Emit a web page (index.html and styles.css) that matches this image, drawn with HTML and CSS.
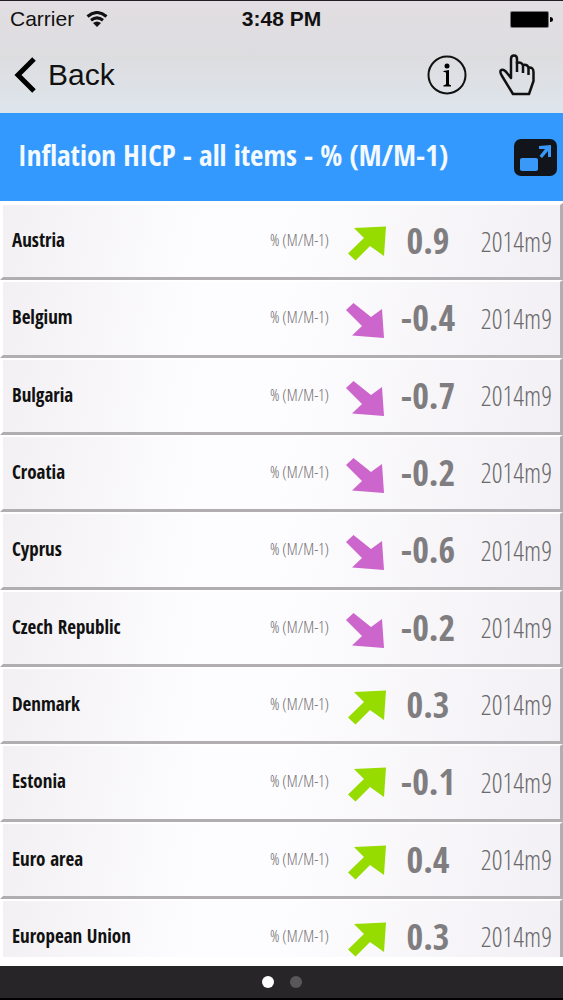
FILE: index.html
```html
<!DOCTYPE html>
<html lang="en">
<head>
  <meta charset="UTF-8">
  <meta name="viewport" content="width=device-width, initial-scale=1.0">
  <title>Inflation HICP</title>
  <link rel="stylesheet" href="styles.css">
</head>
<body>
  <svg class="defs" aria-hidden="true">
    <symbol id="arrow-up" viewBox="0 0 40 40">
      <path d="M8 7 L40 5.500 L38 35 L24 25 L9.500 39.500 L2 32.500 L18 17 Z"/>
    </symbol>
    <symbol id="arrow-down" viewBox="0 0 40 40">
      <path d="M7.500 5 L25 19 L36 11 L38 40 L6 37.500 L16 28 L0 12 Z"/>
    </symbol>
  </svg>

  <header class="top">
    <div class="status">
      <div class="carrier">
        <span>Carrier</span>
        <svg class="wifi" viewBox="0 0 22 16">
          <path d="M1.500 5.500 Q11 -2.500 20.500 5.500" />
          <path d="M5 9.200 Q11 4.500 17 9.200" />
          <path class="solid" d="M7 12 Q11 9 15 12 L11 16 Z" />
        </svg>
      </div>
      <span class="time">3:48 PM</span>
      <svg class="battery" viewBox="0 0 43 17">
        <rect x="0" y="0" width="39" height="17" rx="2" fill="#777"/>
        <rect x="1" y="1" width="37" height="15" rx="1"/>
        <path d="M40 6 Q43 6 43 8.500 Q43 11 40 11 Z"/>
      </svg>
    </div>
    <nav class="nav">
      <a href="#" class="back">
        <svg class="chevron" viewBox="0 0 22 36"><path d="M20 2 L4 18 L20 34"/></svg>
        <span>Back</span>
      </a>
      <button class="icon-btn" aria-label="Info">
        <svg class="info" viewBox="0 0 40 40">
          <circle class="ring" cx="20" cy="20" r="18.500"/>
          <circle cx="20" cy="11" r="2.500"/>
          <path d="M16.500 16 L22 15 V29 Q22 30 24 30.300 V31.500 H16.500 V30.300 Q19 30 19 29 V18 Q19 16.700 16.500 17 Z"/>
        </svg>
      </button>
      <button class="icon-btn" aria-label="Select">
        <svg class="hand" viewBox="0 0 36 42">
          <path d="M14 40 L3 22 Q0 17 2.500 16 Q5 15 8 19 L12 24 V5 Q12 1.500 15 1.500 Q18 1.500 18 5 V9 Q22 7.500 24 11 Q28 10 29.500 13.500 Q34.500 13 34.500 18 V27 L30 40 Z"/>
          <path d="M18 8 V18 M24 11 V19 M29.500 14 V21"/>
        </svg>
      </button>
    </nav>
  </header>

  <div class="title-bar">
    <h1>Inflation HICP - all items - % (M/M-1)</h1>
    <button class="expand" aria-label="Expand">
      <svg viewBox="0 0 43 37">
        <rect width="43" height="37" rx="7" fill="#11151b"/>
        <rect x="6" y="19" width="18" height="13" rx="2" fill="#3a98f8"/>
        <path d="M25 7 L37 6 L37 18 L34 18 V12 L28 19 L25.500 17 L31 10 H25 Z" fill="#3a98f8"/>
      </svg>
    </button>
  </div>

  <main class="panel">
    <ul class="list">
      <li class="row"><div class="cells"><span class="name">Austria</span><span class="unit">% (M/M-1)</span><svg class="arrow up"><use href="#arrow-up"/></svg><span class="value">0.9</span><span class="date">2014m9</span></div></li>
      <li class="row"><div class="cells"><span class="name">Belgium</span><span class="unit">% (M/M-1)</span><svg class="arrow down"><use href="#arrow-down"/></svg><span class="value">-0.4</span><span class="date">2014m9</span></div></li>
      <li class="row"><div class="cells"><span class="name">Bulgaria</span><span class="unit">% (M/M-1)</span><svg class="arrow down"><use href="#arrow-down"/></svg><span class="value">-0.7</span><span class="date">2014m9</span></div></li>
      <li class="row"><div class="cells"><span class="name">Croatia</span><span class="unit">% (M/M-1)</span><svg class="arrow down"><use href="#arrow-down"/></svg><span class="value">-0.2</span><span class="date">2014m9</span></div></li>
      <li class="row"><div class="cells"><span class="name">Cyprus</span><span class="unit">% (M/M-1)</span><svg class="arrow down"><use href="#arrow-down"/></svg><span class="value">-0.6</span><span class="date">2014m9</span></div></li>
      <li class="row"><div class="cells"><span class="name">Czech Republic</span><span class="unit">% (M/M-1)</span><svg class="arrow down"><use href="#arrow-down"/></svg><span class="value">-0.2</span><span class="date">2014m9</span></div></li>
      <li class="row"><div class="cells"><span class="name">Denmark</span><span class="unit">% (M/M-1)</span><svg class="arrow up"><use href="#arrow-up"/></svg><span class="value">0.3</span><span class="date">2014m9</span></div></li>
      <li class="row"><div class="cells"><span class="name">Estonia</span><span class="unit">% (M/M-1)</span><svg class="arrow up"><use href="#arrow-up"/></svg><span class="value">-0.1</span><span class="date">2014m9</span></div></li>
      <li class="row"><div class="cells"><span class="name">Euro area</span><span class="unit">% (M/M-1)</span><svg class="arrow up"><use href="#arrow-up"/></svg><span class="value">0.4</span><span class="date">2014m9</span></div></li>
      <li class="row cut"><div class="cells"><span class="name">European Union</span><span class="unit">% (M/M-1)</span><svg class="arrow up"><use href="#arrow-up"/></svg><span class="value">0.3</span><span class="date">2014m9</span></div></li>
    </ul>
  </main>

  <footer class="pager">
    <span class="dot active"></span>
    <span class="dot"></span>
  </footer>
</body>
</html>
```
FILE: styles.css
```css
* {
  box-sizing: border-box;
}
body {
  margin: 0;
  min-height: 100vh;
  display: flex;
  flex-direction: column;
  background-color: #fff;
  color: #111;
  font-family: "Open Sans Condensed", "Liberation Sans Narrow", "Liberation Sans", sans-serif;
}
button {
  padding: 0;
  border: none;
  background: none;
  cursor: pointer;
}
svg {
  display: block;
}
.defs {
  position: absolute;
  width: 0;
  height: 0;
}

/* status bar + navigation */
.top {
  height: 113px;
  border-top: 1px solid #221c24;
  background: linear-gradient(#e2dee2, #dddde0 50%, #dde5ec);
  font-family: "Liberation Sans", Arial, sans-serif;
}
.status {
  display: grid;
  grid-template-columns: 1fr auto 1fr;
  align-items: center;
  height: 36px;
  padding: 0 10px;
  font-size: 21px;
}
.carrier {
  display: flex;
  align-items: center;
  gap: 12px;
}
.wifi {
  width: 22px;
  height: 16px;
  fill: none;
  stroke: #111;
  stroke-width: 3;
}
.wifi .solid {
  fill: #111;
  stroke: none;
}
.time {
  font-weight: bold;
}
.battery {
  justify-self: end;
  width: 43px;
  height: 17px;
}
.nav {
  display: flex;
  align-items: center;
  gap: 32px;
  height: 76px;
  padding: 0 28px 0 14px;
}
.back {
  display: flex;
  align-items: center;
  gap: 12px;
  margin-right: auto;
  color: #111;
  font-size: 30px;
  text-decoration: none;
}
.chevron {
  width: 22px;
  height: 36px;
  fill: none;
  stroke: #000;
  stroke-width: 5;
}
.info {
  width: 40px;
  height: 40px;
}
.info .ring {
  fill: none;
  stroke: #111;
  stroke-width: 2;
}
.hand {
  width: 36px;
  height: 42px;
  fill: none;
  stroke: #111;
  stroke-width: 2.500;
  stroke-linejoin: round;
}

/* blue title */
.title-bar {
  display: flex;
  align-items: center;
  justify-content: space-between;
  height: 88px;
  padding: 0 6px 0 18px;
  background-color: #3399ff;
}
h1 {
  margin: 0;
  padding-bottom: 4px;
  color: #f4faff;
  font-size: 29px;
  line-height: 40px;
  white-space: nowrap;
}
.expand svg {
  width: 43px;
  height: 37px;
}

/* country list */
.panel {
  flex: 1;
  display: flex;
  padding: 2px 0 9px;
}
.list {
  flex: 1;
  display: flex;
  flex-direction: column;
  margin: 0;
  padding: 0;
  list-style: none;
}
.row {
  flex: 1;
  border: solid;
  border-width: 2px 3px 3px;
  border-color: #fff #b0aeb1 #b0aeb1 #fff;
  background: linear-gradient(100deg, #f2f0f3, #fdfcfe 35%, #fdfcfe 50%, #f2f0f4);
}
.row.cut {
  flex: 0 0 58px;
  min-height: 0;
  height: 58px;
  border-bottom: none;
}
.cells {
  display: grid;
  grid-template-columns: 1fr auto 40px 84px 82px;
  align-items: center;
  height: 72px;
  padding: 0 8px 0 9px;
}
.name,
.unit {
  padding-bottom: 2px;
}
.name {
  font-size: 19px;
  font-weight: bold;
}
.unit,
.date {
  font-family: "Open Sans Condensed Light", "Roboto Condensed", "Liberation Sans Narrow", sans-serif;
  font-weight: normal;
}
.unit {
  margin-right: 17px;
  color: #706e71;
  font-size: 16px;
}
.arrow {
  width: 40px;
  height: 40px;
}
.arrow.up {
  fill: #96dc00;
}
.arrow.down {
  fill: #cc66cc;
}
.value {
  color: #7f7d80;
  font-size: 36px;
  font-weight: bold;
  line-height: 34px;
  text-align: center;
}
.date {
  color: #6c6a6d;
  font-size: 27px;
  text-align: right;
}

/* page dots */
.pager {
  display: flex;
  align-items: center;
  justify-content: center;
  gap: 16px;
  height: 34px;
  border-bottom: 2px solid #000;
  background-color: #272528;
}
.dot {
  width: 12px;
  height: 12px;
  border-radius: 50%;
  background-color: #59575a;
}
.dot.active {
  background-color: #fff;
}
```
